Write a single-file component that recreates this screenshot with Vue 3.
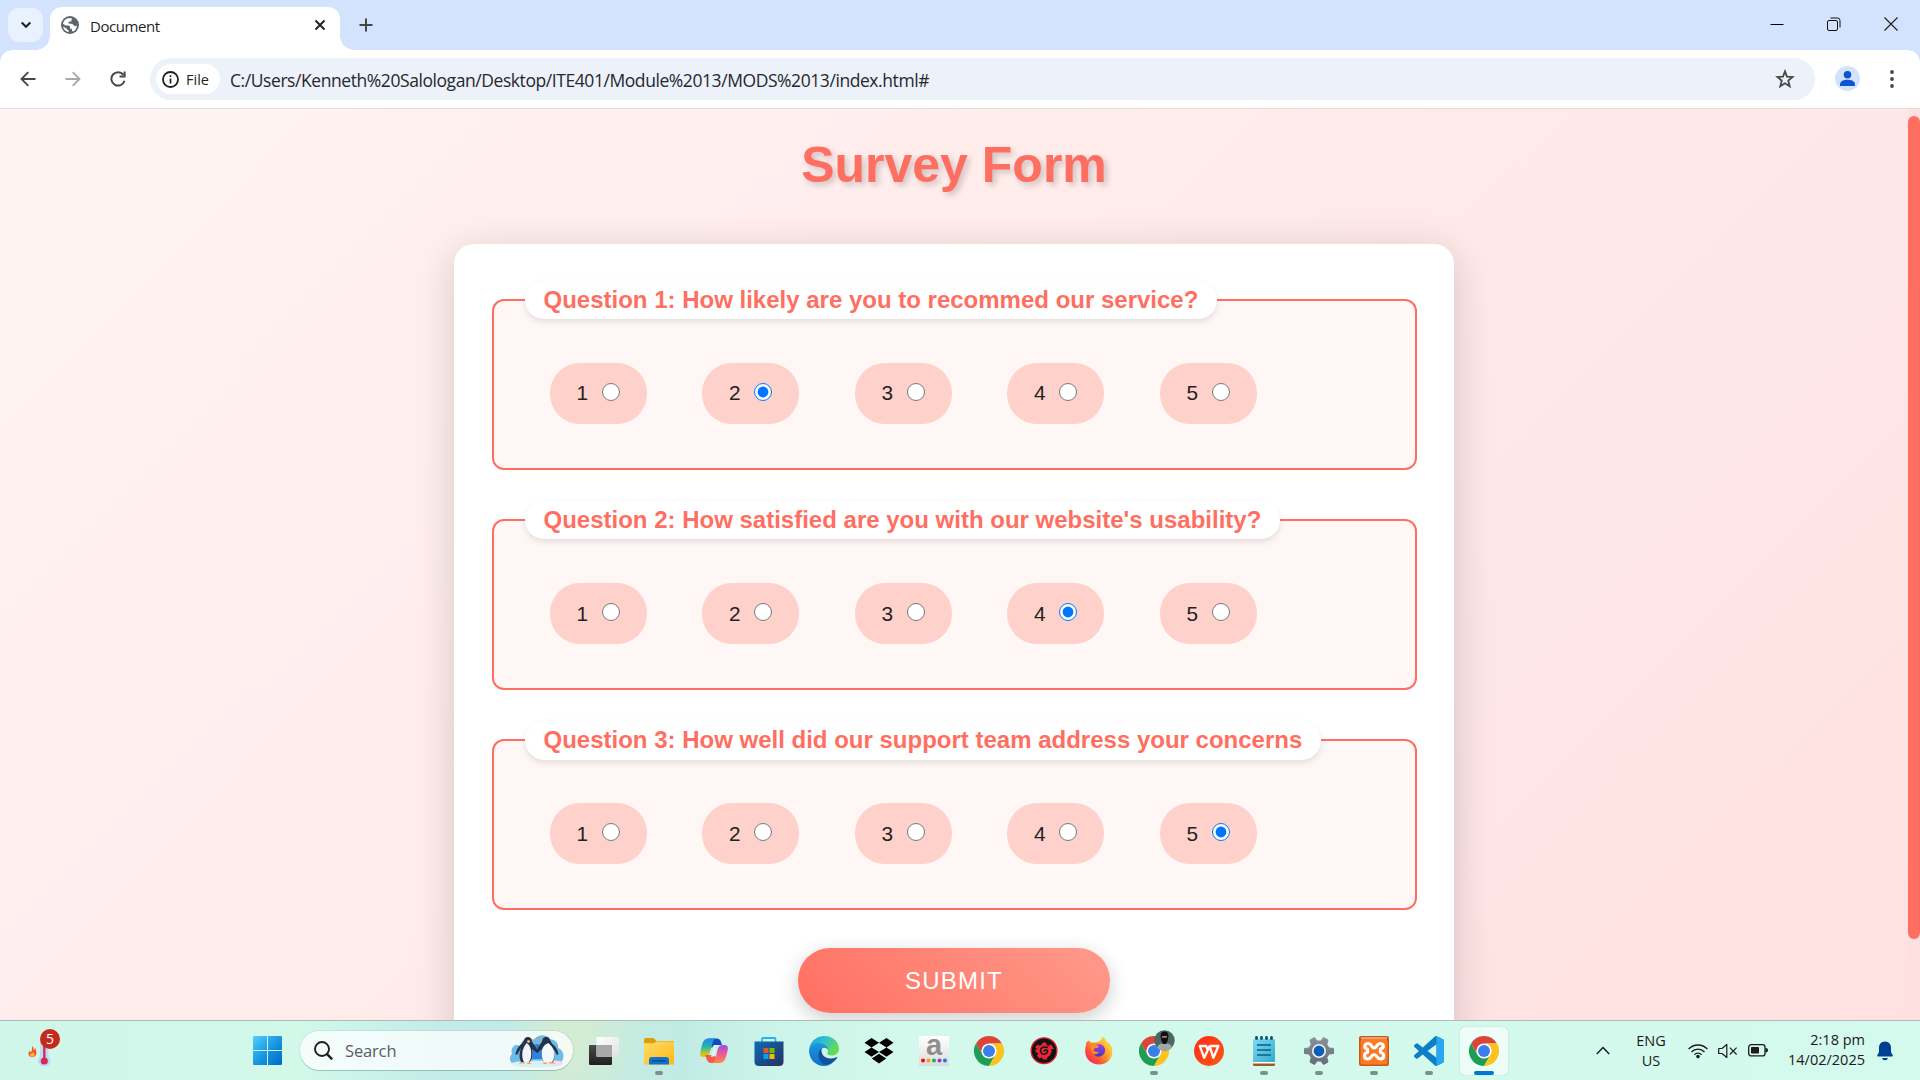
<script setup>
import { ref } from 'vue'

const levels = [1, 2, 3, 4, 5]

const questions = ref([
  { id: 'q1', text: 'Question 1: How likely are you to recommed our service?', answer: 2 },
  { id: 'q2', text: "Question 2: How satisfied are you with our website's usability?", answer: 4 },
  { id: 'q3', text: 'Question 3: How well did our support team address your concerns', answer: 5 },
])

const apps = [
  { id: 'taskview' },
  { id: 'folder', open: true },
  { id: 'copilot' },
  { id: 'store' },
  { id: 'edge' },
  { id: 'dropbox' },
  { id: 'amazon' },
  { id: 'chrome' },
  { id: 'game' },
  { id: 'firefox' },
  { id: 'chrome', open: true, profile: true },
  { id: 'wps' },
  { id: 'notepad', open: true },
  { id: 'settings', open: true },
  { id: 'xampp', open: true },
  { id: 'vscode', open: true },
  { id: 'chrome', open: true, active: true },
]
</script>

<template>
  <div class="screen">
    <svg class="defs" width="0" height="0" aria-hidden="true">
      <defs>
        <linearGradient id="gWin" x1="0" y1="0" x2="1" y2="1"><stop offset="0" stop-color="#4fd0ff" /><stop offset=".55" stop-color="#1593e0" /><stop offset="1" stop-color="#0068c8" /></linearGradient>
        <linearGradient id="gDark" x1="0" y1="0" x2="0" y2="1"><stop offset="0" stop-color="#4a4a4a" /><stop offset="1" stop-color="#1f1f1f" /></linearGradient>
        <linearGradient id="gFold" x1="0" y1="0" x2="1" y2="1"><stop offset="0" stop-color="#ffdc6c" /><stop offset="1" stop-color="#fdb913" /></linearGradient>
        <linearGradient id="gBag" x1="0" y1="0" x2="1" y2="1"><stop offset="0" stop-color="#0a6dbb" /><stop offset="1" stop-color="#2a2f5e" /></linearGradient>
        <linearGradient id="gCopA" x1="0" y1="0" x2="0" y2="1"><stop offset="0" stop-color="#1b8de6" /><stop offset=".45" stop-color="#28b4a8" /><stop offset=".75" stop-color="#a6c83a" /><stop offset="1" stop-color="#ffc400" /></linearGradient>
        <linearGradient id="gCopB" x1="0" y1="0" x2="0" y2="1"><stop offset="0" stop-color="#a24be0" /><stop offset=".5" stop-color="#ee5a94" /><stop offset="1" stop-color="#ff8a3c" /></linearGradient>
        <linearGradient id="gEdgeA" x1="0" y1="0" x2="1" y2=".5"><stop offset="0" stop-color="#1e9be0" /><stop offset=".5" stop-color="#2fc1d0" /><stop offset="1" stop-color="#68dc4c" /></linearGradient>
        <linearGradient id="gEdgeB" x1="0" y1="0" x2="0" y2="1"><stop offset="0" stop-color="#1f97e0" /><stop offset="1" stop-color="#0d6fc8" /></linearGradient>
        <linearGradient id="gFox" x1="1" y1="0" x2="0" y2="1"><stop offset="0" stop-color="#fff04a" /><stop offset=".4" stop-color="#ffa52a" /><stop offset=".72" stop-color="#ff4a3a" /><stop offset="1" stop-color="#f0127a" /></linearGradient>
        <linearGradient id="gFox2" x1="0" y1="0" x2="0" y2="1"><stop offset="0" stop-color="#a03cf0" /><stop offset="1" stop-color="#4b3bb8" /></linearGradient>
        <linearGradient id="gWps" x1="0" y1="0" x2="1" y2="1"><stop offset="0" stop-color="#ff2a1a" /><stop offset="1" stop-color="#ff5a10" /></linearGradient>
        <linearGradient id="gNote" x1="0" y1="0" x2="1" y2="1"><stop offset="0" stop-color="#7bdcf2" /><stop offset="1" stop-color="#34a9d0" /></linearGradient>
        <linearGradient id="gGear" x1="0" y1="0" x2="0" y2="1"><stop offset="0" stop-color="#8a9098" /><stop offset="1" stop-color="#666d76" /></linearGradient>
        <linearGradient id="gAm" x1="0" y1="0" x2="0" y2="1"><stop offset="0" stop-color="#ffffff" /><stop offset="1" stop-color="#dcdcdc" /></linearGradient>
        <linearGradient id="gGlass" x1="0" y1="0" x2="1" y2="1"><stop offset="0" stop-color="#ffffff" /><stop offset="1" stop-color="#dfe2e2" /></linearGradient>
      </defs>
      <symbol id="chrome" viewBox="0 0 48 48">
        <path fill="#db4437" d="M3.215 12A24 24 0 0 1 44.785 12H24A12 12 0 0 0 13.6 30Z" />
        <path fill="#1e9e55" d="M3.215 12A24 24 0 0 0 24 48L34.4 30A12 12 0 0 1 13.6 30Z" />
        <path fill="#fcc31e" d="M24 48A24 24 0 0 0 44.785 12H24A12 12 0 0 1 34.4 30Z" />
        <circle cx="24" cy="24" r="11.7" fill="#fff" />
        <circle cx="24" cy="24" r="9.6" fill="#3b7ded" />
      </symbol>
      <symbol id="taskview" viewBox="0 0 30 30">
        <rect x="0" y="9" width="23" height="20" rx="1.2" fill="url(#gDark)" />
        <rect x="7.5" y="1" width="22.5" height="20" rx="1.2" fill="url(#gGlass)" />
        <path fill="#a9a9a9" d="M7.5 9H23V21H8.5Q7.5 21 7.5 20Z" />
      </symbol>
      <symbol id="folder" viewBox="0 0 30 30">
        <path fill="#e29c08" d="M0 4Q0 2 2 2H9.5L12.5 5H29Q30 5 30 6V12H0Z" />
        <path fill="url(#gFold)" d="M0 7.2H9.5L12.5 5.5H30V28.5H0Z" />
        <path fill="#1173c7" d="M5 28.5V24Q5 21 8 21H22Q25 21 25 24V28.5Z" />
        <rect x="8" y="24.3" width="14" height="1.2" rx=".6" fill="#0b3f86" />
      </symbol>
      <symbol id="copilot" viewBox="0 0 30 30">
        <path fill="#1749c4" d="M9 2.5H18Q21 2.5 22 6L23 9H16Q14 9 13 12L10 8Z" />
        <path fill="url(#gCopA)" d="M9 2.5H17Q14.5 3 13.5 7L11 16Q9.5 21 6 21H4Q.5 21 1.3 16.5Q2.5 9 4.5 5Q6 2.5 9 2.5Z" />
        <path fill="#f45b4b" d="M6 19H14L18 22L15 27H12Q9 27 8 24Z" />
        <path fill="url(#gCopB)" d="M20 27H12.5Q15.5 26.5 16.5 22.5L18.5 14Q20 9 23.5 9H25.5Q29.5 9 28.8 13.5Q27.5 21 25 25Q23.5 27 20 27Z" />
        <path fill="#d8f4f4" d="M15 9H18L15.5 19Q15 21 12 21Z" />
      </symbol>
      <symbol id="store" viewBox="0 0 30 30">
        <path fill="none" stroke="#28b4ee" stroke-width="1.8" d="M8 7V3Q8 2 9 2H20.5Q21.5 2 21.5 3V7" />
        <path fill="url(#gBag)" d="M.5 5.5H29.5V25.5Q29.5 30 25 30H5Q.5 30 .5 25.5Z" />
        <path fill="#f25022" d="M9.5 12H14.5V17H9.5Z" /><path fill="#7fba00" d="M15.5 12H20.5V17H15.5Z" />
        <path fill="#00a4ef" d="M9.5 18H14.5V23H9.5Z" /><path fill="#ffb900" d="M15.5 18H20.5V23H15.5Z" />
      </symbol>
      <symbol id="edge" viewBox="0 0 30 30">
        <path fill="url(#gEdgeA)" d="M.2 13.5C1 5.5 7.5 0 15.2 0C24 0 30 6.2 30 12.5C30 17 26.6 19.6 22.8 19.6C19.5 19.6 17.7 18.3 18.5 17C20 15 19 9 12 8.5C6 8.2 1.6 10 .2 13.5Z" />
        <path fill="url(#gEdgeB)" d="M0 14.5C.6 9.5 5 7 10 7C15.5 7 19.3 11 19.3 14.5C17.5 10.5 12 11 11.5 16C11 21 16 26 24 26.5C21 29 18 30 15 30C6.5 30 0 23 0 14.5Z" />
        <path fill="#10509c" d="M12.5 12.5C8 16 8.5 24 14 27.5C18 30 24 28 28.3 21.8C28.5 21.2 28 20.9 27.5 21.2C20 24.5 11.5 21.5 12.5 12.5Z" />
      </symbol>
      <symbol id="dropbox" viewBox="0 0 30 30">
        <path d="M7.5 2L.5 6.7L7.5 11.4L15 6.7ZM22.5 2L15 6.7L22.5 11.4L29.5 6.7ZM.5 16L7.5 20.7L15 16L7.5 11.4ZM22.5 11.4L15 16L22.5 20.7L29.5 16ZM7.8 22.5L15 27.5L22.2 22.5L15 17.7Z" />
      </symbol>
      <symbol id="game" viewBox="0 0 30 30">
        <circle cx="15" cy="14.7" r="12.9" fill="#131316" stroke="#e2202c" stroke-width="1.3" />
        <path fill="#ea2630" d="M6 11L9 8.5L11 10L13 8L14 6.5H17L17.5 9L20 10L22 8L25 13H22.5C23 17 21 20 18.5 21L18 23.5H14L13 21.5L10 22.5L8 19.5L9.5 17.5L6.500 16V13.5L8.500 13Z" />
        <path fill="none" stroke="#131316" stroke-width="1.5" d="M19 11.5C13 9.5 10.5 13 12 16.5C13.5 19.5 18.5 18.5 18.5 14.5C17 13.5 15.5 14 15 15.5" />
      </symbol>
      <symbol id="firefox" viewBox="0 0 30 30">
        <path fill="url(#gFox)" d="M2.5 6L5 4.5L6.5 6.5L10 6.5L14 6L17 4L19 .5C21 2 22 5 23 7L25 7.5C28 10.5 28.7 14 28 18C27 24 22 28.5 15 28.5C7.5 28.5 1 23 1.2 15C1.2 11.5 2 8.5 2.5 6Z" />
        <circle cx="14.7" cy="14.3" r="6.4" fill="url(#gFox2)" />
        <path fill="#ff8a23" d="M6 8.5C9 7.5 12 8 15 10.5L13.5 12H11.5C10 12.5 9.5 14 9.5 14.5C11 16 13 15.5 15 16C13 18.5 10 19 8 17Z" />
        <path fill="#ffc93a" opacity=".8" d="M19 1C24 7 26 13 23.5 18C25.5 16 26 14 26 12C27.5 17 25 23 21 25.5C27 23 29.5 16 27 10C25 6 20 4 19 1Z" />
      </symbol>
      <symbol id="wps" viewBox="0 0 30 30">
        <circle cx="15" cy="15" r="15" fill="url(#gWps)" />
        <path fill="none" stroke="#fff" stroke-width="2.3" stroke-linejoin="round" d="M13.8 14.5L12.2 10H5.8L10.2 21.8L15.600 10.200L19.400 21.800L24.400 10H16.400" />
      </symbol>
      <symbol id="notepad" viewBox="0 0 30 30">
        <path fill="#a4561a" d="M4 26H26V28.5Q26 30 24.5 30H5.5Q4 30 4 28.5Z" />
        <path fill="#fff" d="M4 22H26V27.5H4Z" />
        <path fill="url(#gNote)" d="M4 4.5Q4 3 5.5 3H24.5Q26 3 26 4.5V26H4Z" />
        <path stroke="#0d5d86" stroke-width="1.5" d="M8 9H22M8 14H22M8 19H22" />
        <path stroke="#0f4f74" stroke-width="2.8" stroke-linecap="round" d="M7.5 1.5V2.5M12.5 1.5V2.5M17.5 1.5V2.5M22.5 1.5V2.5" />
      </symbol>
      <symbol id="settings" viewBox="0 0 30 30">
        <path fill="url(#gGear)" stroke="url(#gGear)" stroke-width="1" stroke-linejoin="round" d="M10.5 1.5L13 5H17L19.5 1.5L24 4L22.8 8.5L25 12L29.5 12.5V17.5L25 18L22.8 21.5L24 26L19.5 28.5L17 25H13L10.5 28.5L6 26L7.2 21.5L5 18L.5 17.5V12.5L5 12L7.2 8.5L6 4Z" />
        <circle cx="15" cy="15" r="7" fill="#f2f6f8" /><circle cx="15" cy="15" r="5.4" fill="#0c5fb4" />
      </symbol>
      <symbol id="xampp" viewBox="0 0 30 30">
        <rect width="30" height="30" rx="2" fill="#c65a18" />
        <rect x="1.5" y="3" width="27" height="25.5" rx="2" fill="#fb7a24" />
        <path fill="#e9a06e" d="M2 1H28V3H2Z" />
        <path fill="none" stroke="#fff" stroke-width="3.2" stroke-linejoin="round" stroke-linecap="round" d="M9.5 7.500C5 7.500 4.500 12.500 8.500 13V16.500C4.500 17 4.500 23 9 23C12.500 23 12.500 18.500 15 18.500C17.500 18.500 18 23 21.500 23C26 22.500 25.500 17 21.500 16.500V13C25.500 12 25 7.500 21 7.500C17.500 7.500 18 12 15 12C12.500 12 12.500 7.500 9.500 7.500Z" />
      </symbol>
      <symbol id="vscode" viewBox="0 0 24 24">
        <path fill="#0d7fc9" d="M23.15 2.587L18.21.21a1.494 1.494 0 0 0-1.705.29l-9.46 8.63-4.12-3.128a.999.999 0 0 0-1.276.057L.327 7.261A1 1 0 0 0 .326 8.74L3.899 12 .326 15.26a1 1 0 0 0 .001 1.479L1.65 17.94a.999.999 0 0 0 1.276.057l4.12-3.128 9.46 8.63a1.492 1.492 0 0 0 1.704.29l4.942-2.377A1.5 1.5 0 0 0 24 20.06V3.939a1.5 1.5 0 0 0-.85-1.352zm-5.146 14.861L10.826 12l7.178-5.448v10.896z" />
        <path fill="#2aa7f2" d="M18.004.15L23.15 2.587Q24 3 24 3.939V20.06Q24 21 23.15 21.412L18.004 23.85Z" />
      </symbol>
    </svg>

    <!-- Browser chrome -->
    <header class="tabstrip">
      <button class="tab-search" aria-label="Search tabs">
        <svg width="12" height="12" viewBox="0 0 12 12"><path d="M1.7 3.5L6 7.8L10.3 3.5" fill="none" stroke="#1f1f1f" stroke-width="2" /></svg>
      </button>
      <div class="tab">
        <svg class="globe" width="22" height="22" viewBox="0 0 24 24"><circle cx="12" cy="12" r="9.8" fill="#5f6368" /><path fill="#fff" d="M11.5 4.3C8 4.4 5 7 4.3 10.6L7 12.6H10.5Q12 12.7 12 14.2V16H14V17.7Q14 19 15.5 19C18 17.8 19.5 15.3 19.7 12.5C18.5 13.4 17 13.3 16 12.3L14.5 10.6H11.5Q10.3 10.4 10.3 9.3Q10.4 8.2 11.6 8.2H13.5V6.8Q13.5 5.8 14.7 5.5C13.7 4.7 12.6 4.3 11.5 4.3ZM4.3 13.5C4.9 16.8 7.4 19.2 10.5 19.7V17.8Q8.6 17.6 8.3 15.7Z" /></svg>
        <span class="tab-title">Document</span>
        <svg class="tab-close" width="12" height="12" viewBox="0 0 12 12"><path d="M1.5 1.5L10.5 10.5M10.5 1.5L1.5 10.5" stroke="#1f1f1f" stroke-width="1.9" /></svg>
      </div>
      <svg class="tab-new" width="14" height="14" viewBox="0 0 14 14"><path d="M7 .5V13.5M.5 7H13.5" stroke="#454746" stroke-width="2" /></svg>
      <div class="window-controls">
        <svg width="14" height="14" viewBox="0 0 14 14"><path d="M.5 7.5H13.5" stroke="#000" /></svg>
        <svg width="14" height="14" viewBox="0 0 14 14"><rect x=".5" y="3.5" width="10" height="10" rx="1.5" fill="none" stroke="#111" /><path d="M3.5 1H10.5Q13 1 13 3.5V10.5" fill="none" stroke="#111" /></svg>
        <svg width="14" height="14" viewBox="0 0 14 14"><path d="M.5 .5L13.5 13.5M13.5 .5L.5 13.5" stroke="#1c1c1c" stroke-width="1.1" /></svg>
      </div>
    </header>

    <div class="toolbar">
      <svg class="nav back" width="16" height="16" viewBox="0 0 16 16"><path d="M15.5 8H2M8.3 1.2L1.5 8L8.3 14.8" fill="none" stroke="#474747" stroke-width="1.9" /></svg>
      <svg class="nav fwd" width="16" height="16" viewBox="0 0 16 16"><path d="M.5 8H14M7.7 1.2L14.5 8L7.7 14.8" fill="none" stroke="#a9a9a9" stroke-width="1.9" /></svg>
      <svg class="nav reload" width="16" height="16" viewBox="0 0 16 16"><path d="M13.4 3.8A6.7 6.7 0 1 0 14.5 9.8" fill="none" stroke="#474747" stroke-width="2" /><path d="M9.5 6.5V4.6H13.6V.5H15.6V6.5Z" fill="#474747" /></svg>
      <div class="omnibox">
        <div class="chip">
          <svg width="17" height="17" viewBox="0 0 17 17"><circle cx="8.5" cy="8.5" r="7.5" fill="none" stroke="#1f1f1f" stroke-width="1.8" /><path d="M8.5 7.5V12.6M8.5 4.2V6" stroke="#1f1f1f" stroke-width="1.7" /></svg>
          <span>File</span>
        </div>
        <span class="url">C:/Users/Kenneth%20Salologan/Desktop/ITE401/Module%2013/MODS%2013/index.html#</span>
        <svg class="star" width="20" height="20" viewBox="0 0 20 20"><path d="M10 2.4L12 7.6L17.6 8L13.3 11.6L14.7 17.2L10 14.2L5.3 17.2L6.7 11.6L2.4 8L8 7.6Z" fill="none" stroke="#474747" stroke-width="1.8" /></svg>
      </div>
      <svg class="avatar" width="25" height="25" viewBox="0 0 25 25"><circle cx="12.5" cy="12.5" r="12.5" fill="#d3e3fd" /><circle cx="12.5" cy="8.7" r="3.8" fill="#0b57d0" /><path d="M5 20V18.3C5 15.2 9 13.8 12.5 13.8S20 15.2 20 18.3V20Z" fill="#0b57d0" /></svg>
      <svg class="more" width="4" height="18" viewBox="0 0 4 18"><circle cx="2" cy="2" r="1.9" fill="#474747" /><circle cx="2" cy="9" r="1.9" fill="#474747" /><circle cx="2" cy="16" r="1.9" fill="#474747" /></svg>
    </div>

    <!-- Page -->
    <div class="viewport">
      <main class="page">
        <h1>Survey Form</h1>
        <form class="card" @submit.prevent>
          <fieldset v-for="q in questions" :key="q.id">
            <legend>{{ q.text }}</legend>
            <div class="options">
              <label v-for="n in levels" :key="n">
                <span>{{ n }}</span>
                <input v-model="q.answer" type="radio" :name="q.id" :value="n">
              </label>
            </div>
          </fieldset>
          <button class="submit" type="submit">SUBMIT</button>
        </form>
      </main>
      <div class="scrollbar"><div class="thumb"></div></div>
    </div>

    <!-- Taskbar -->
    <footer class="taskbar">
      <div class="weather">
        <svg width="34" height="30" viewBox="0 0 34 30">
          <path fill="#f0592b" d="M4.5 10C6 11 5 13 6 14Q7 14.500 6.800 11.800C9 14 9.500 21 4.500 21.200C0 21-.5 17 1.800 14.500Q2 16.500 3 16C4.500 14.500 3.500 12 4.500 10Z" />
          <path fill="#ffb23c" d="M5 16C7 17.500 7 20.800 4.500 20.800S1.700 18.500 2.500 17.500Q4.500 18 5 16Z" />
          <path fill="#b9dcf8" d="M12 8Q12 4 16 4T20.500 8V20.500A6.200 6.200 0 1 1 12 20.500Z" />
          <path stroke="#dd2f57" stroke-width="2.5" d="M16.300 8V24" /><circle cx="16.300" cy="25" r="3.600" fill="#d62a50" />
        </svg>
        <span class="badge">5</span>
      </div>
      <div class="start">
        <svg width="29" height="29" viewBox="0 0 29 29"><path fill="url(#gWin)" d="M1 0H14V14H0V1Q0 0 1 0ZM15 0H28Q29 0 29 1V14H15ZM0 15H14V29H1Q0 29 0 28ZM15 15H29V28Q29 29 28 29H15Z" /></svg>
      </div>
      <div class="search">
        <svg class="lens" width="19" height="19" viewBox="0 0 19 19"><circle cx="8" cy="8" r="7" fill="none" stroke="#1f1f1f" stroke-width="1.9" /><path d="M13 13.2L17.5 17.7" stroke="#1f1f1f" stroke-width="2.4" stroke-linecap="round" /></svg>
        <span>Search</span>
        <svg class="penguins" width="56" height="34" viewBox="0 0 56 34">
          <path fill="#6cbbe9" d="M9 31C1 31-1 24 3 20C1 14 6 9 11 12C13 5 20 3 25 6C28 0 38 0 41 5C47 6 50 10 49 14C55 16 57 25 50 30Z" />
          <path fill="#2f83dc" d="M22 14Q28 6 34 14V25H22Z" />
          <ellipse cx="28" cy="30" rx="26" ry="3.6" fill="#d9f0f7" /><ellipse cx="46" cy="29" rx="8" ry="2.6" fill="#f3dcec" />
          <g>
            <path fill="#26324a" d="M15 6Q16 2.5 19.5 3Q23 3.5 23 7.5Q26 12 29 17L28 19L23 15Q24 24 21 28H12Q9 22 12 14L8 21L6.5 20Q8 13 13 9.5Z" />
            <path fill="#eef4f8" d="M17.5 9Q21 11 22 16Q23 24 20 28H15Q12.5 24 13.5 17Q14.5 13 17.5 9Z" />
            <path fill="#f3a24b" d="M22.500 5L26.500 5.500L23 7ZM12 28L9.5 29.5H15L16 28ZM19 28L18 30H23Z" />
            <circle cx="19.500" cy="7.500" r="1.300" fill="#f2e2c4" />
          </g>
          <g transform="translate(56 0) scale(-1 1)">
            <path fill="#26324a" d="M15 6Q16 2.5 19.5 3Q23 3.5 23 7.500Q26 12 29 17L28 19L23 15Q24 24 21 28H12Q9 22 12 14L8 21L6.5 20Q8 13 13 9.5Z" />
            <path fill="#f2f7fa" d="M16.5 9Q22 11 23 16Q24 24 21 28H13Q9.500 24 11 17Q12 13 16.5 9Z" />
            <path fill="#f3a24b" d="M22.5 5L26.5 5.500L23 7ZM12 28L9.5 29.5H15L16 28ZM19 28L18 30H23Z" />
          </g>
        </svg>
      </div>
      <nav class="apps">
        <div v-for="(app, i) in apps" :key="i" class="app" :class="{ open: app.open, active: app.active }">
          <svg v-if="app.id === 'amazon'" width="30" height="30" viewBox="0 0 30 30">
            <rect width="30" height="30" fill="url(#gAm)" />
            <text x="15" y="19" text-anchor="middle" font-family="Liberation Sans, sans-serif" font-weight="bold" font-size="29" fill="#8f8f8f">a</text>
            <circle cx="4" cy="24.5" r="2" fill="#f00d12" /><circle cx="9.5" cy="24.5" r="2" fill="#f29c1f" /><circle cx="15" cy="24.5" r="2" fill="#1fae54" /><circle cx="20.5" cy="24.5" r="2" fill="#8b3bdc" /><circle cx="26" cy="24.5" r="2" fill="#1680d8" />
          </svg>
          <svg v-else width="30" height="30"><use :href="'#' + app.id" /></svg>
          <svg v-if="app.profile" class="profile" width="21" height="21" viewBox="0 0 21 21">
            <circle cx="10.5" cy="10.5" r="10.2" fill="#4c6664" />
            <path fill="#9fa9ac" d="M3 17.5Q5 13.5 8 13.500H13Q16.5 13.5 18 17.5Q15 20.7 10.5 20.7T3 17.5Z" />
            <path fill="#0f0f10" d="M6.500 6Q6.500 1.500 10.500 1.500T14.500 6L13.500 11L12 14H9L7.500 11Z" />
            <path fill="#a07b6a" d="M8 6H13V7.800H8Z" />
          </svg>
        </div>
      </nav>
      <div class="tray">
        <svg class="chev" width="14" height="9" viewBox="0 0 14 9"><path d="M.8 8L7 1.6L13.2 8" fill="none" stroke="#1b1b1b" stroke-width="1.5" /></svg>
        <div class="lang"><span>ENG</span><span>US</span></div>
        <svg class="wifi" width="20" height="16" viewBox="0 0 20 16"><g fill="none" stroke="#1b1b1b" stroke-width="1.3"><path d="M.6 6A13 13 0 0 1 19.4 6" /><path d="M3.5 9A9 9 0 0 1 16.5 9" /><path d="M6.4 11.7A5 5 0 0 1 13.6 11.7" /></g><circle cx="10" cy="13.6" r="1.8" fill="#1b1b1b" /></svg>
        <svg class="mute" width="20" height="16" viewBox="0 0 20 16"><path d="M.7 5.5H4L8.8 1.5V14.5L4 10.5H.7Z" fill="none" stroke="#1b1b1b" stroke-width="1.2" stroke-linejoin="round" /><path d="M11.800 4.700L18.600 11.500M18.600 4.700L11.800 11.500" stroke="#1b1b1b" stroke-width="1.2" /></svg>
        <svg class="batt" width="20" height="13" viewBox="0 0 20 13"><rect x=".7" y=".7" width="16.3" height="11.2" rx="2.5" fill="none" stroke="#1b1b1b" stroke-width="1.3" /><rect x="3" y="3" width="8" height="6.6" rx=".8" fill="#1b1b1b" /><path d="M17.5 4H18.3Q20 4.4 20 6.3T18.3 8.600H17.5Z" fill="#1b1b1b" /></svg>
        <div class="clock"><span>2:18 pm</span><span>14/02/2025</span></div>
        <svg class="bell" width="16" height="20" viewBox="0 0 16 20"><path fill="#013f94" d="M8 .5C11.7 .5 14 3.3 14 6.800V11L15.8 14.4Q16 15.400 15 15.500H1Q0 15.400 .2 14.400L2 11V6.800C2 3.300 4.300 .5 8 .5ZM5 17H11Q10.500 19.300 8 19.300T5 17Z" /></svg>
      </div>
    </footer>
  </div>
</template>

<style>
body {
  overflow: hidden;
}
</style>

<style scoped>
* {
  box-sizing: border-box;
}
.screen {
  width: 1920px;
  height: 1080px;
  display: flex;
  flex-direction: column;
  overflow: hidden;
  background: #fff;
  font-family: "Open Sans", "Noto Sans", sans-serif;
}
.screen svg {
  display: block;
  flex: none;
}
.defs {
  position: absolute;
}

/* tab strip */
.tabstrip {
  height: 50px;
  flex: none;
  display: flex;
  align-items: flex-start;
  background: #d3e3fd;
}
.tab-search {
  width: 35px;
  height: 34px;
  margin: 8px 7px 0 8px;
  padding: 0;
  border: 0;
  border-radius: 11px;
  background: #e9f0fe;
  display: flex;
  align-items: center;
  justify-content: center;
}
.tab {
  position: relative;
  width: 290px;
  height: 43px;
  margin-top: 7px;
  padding: 0 14px 7px 9px;
  border-radius: 12px 12px 0 0;
  background: #fff;
  display: flex;
  align-items: center;
}
.tab::before,
.tab::after {
  content: "";
  position: absolute;
  bottom: 0;
  width: 14px;
  height: 14px;
}
.tab::before {
  left: -14px;
  background: radial-gradient(circle at 0 0, transparent 13.5px, #fff 14px);
}
.tab::after {
  right: -14px;
  background: radial-gradient(circle at 100% 0, transparent 13.5px, #fff 14px);
}
.tab-title {
  flex: 1;
  margin: 1px 0 0 9px;
  font-size: 15px;
  line-height: 20px;
  letter-spacing: -0.45px;
  color: #1f1f1f;
}
.tab-new {
  margin: 18px 0 0 18.5px;
}
.window-controls {
  margin: 17px 22px 0 auto;
  display: flex;
  gap: 43px;
}

/* toolbar */
.toolbar {
  height: 59px;
  flex: none;
  display: flex;
  align-items: center;
  padding-bottom: 1px;
  border-bottom: 1px solid #dbe0e0;
  background:
    radial-gradient(circle at 12px 12px, #fff 11.5px, #d3e3fd 12px) 0 0 / 12px 12px no-repeat,
    radial-gradient(circle at 0 12px, #fff 11.5px, #d3e3fd 12px) 100% 0 / 12px 12px no-repeat,
    #fff;
}
.back {
  margin-left: 20px;
}
.fwd {
  margin-left: 28.5px;
}
.reload {
  margin-left: 29px;
}
.omnibox {
  width: 1665px;
  height: 42px;
  margin: 1px 0 0 24.5px;
  padding: 0 20px 0 6px;
  border-radius: 21px;
  background: #ecf1fa;
  display: flex;
  align-items: center;
}
.chip {
  width: 64px;
  height: 30px;
  padding-left: 6px;
  border-radius: 15px;
  background: #fff;
  display: flex;
  align-items: center;
  gap: 7px;
  font-size: 14.5px;
  font-weight: 500;
  color: #1f1f1f;
}
.url {
  margin-left: 10px;
  padding-top: 1px;
  flex: 1;
  font-size: 17.5px;
  line-height: 24px;
  letter-spacing: -0.43px;
  color: #26282b;
  white-space: nowrap;
}
.avatar {
  margin-left: 20px;
}
.more {
  margin-left: 30px;
}

/* page */
.viewport {
  height: 911px;
  flex: none;
  display: flex;
  overflow: hidden;
  background: linear-gradient(135deg, #fff4f2, #ffe0e1) 0 0 / 100% 1000px;
}
.page {
  width: 1908px;
  height: 911px;
  font-family: "Liberation Sans", Arial, sans-serif;
}
h1 {
  margin: 29px 0 0;
  font-size: 50px;
  line-height: 55px;
  text-align: center;
  color: #ff6f61;
  text-shadow: 3px 3px 6px rgba(0, 0, 0, 0.2);
}
.card {
  width: 1000px;
  height: 900px;
  margin: 51px auto 0;
  padding: 37px 37.5px 0;
  border-radius: 20px;
  background: #fff;
  box-shadow: 0 8px 40px rgba(0, 0, 0, 0.17);
}
fieldset {
  height: 189.2px;
  margin: 0 0 30.9px;
  padding: 0 0 0 56px;
  border: 2px solid #ff6f61;
  border-radius: 12px;
  background: #fff6f6;
}
legend {
  height: 38.4px;
  margin-left: -25px;
  padding: 0 19px;
  border-radius: 20px;
  background: #fff;
  box-shadow: 0 3px 6px rgba(0, 0, 0, 0.1);
  font-size: 24px;
  font-weight: bold;
  line-height: 38px;
  color: #ff6f61;
  white-space: nowrap;
}
.options {
  display: flex;
  gap: 55.5px;
  margin-top: 43.6px;
}
label {
  width: 97px;
  height: 61px;
  padding-left: 27px;
  border-radius: 30px;
  background: #ffd1cb;
  display: flex;
  align-items: center;
  font-size: 20.8px;
  color: #222;
}
input {
  width: 18px;
  height: 18px;
  margin: 0 0 3px 13.6px;
}
.submit {
  display: block;
  width: 312px;
  height: 65px;
  margin: 38px auto 0;
  border: 0;
  border-radius: 32px;
  background: linear-gradient(45deg, #ff6f61, #ff9a8b);
  box-shadow: 0 6px 20px rgba(0, 0, 0, 0.2);
  font-family: inherit;
  font-size: 24px;
  letter-spacing: 1.2px;
  color: #fff;
}
.scrollbar {
  width: 12px;
  padding-top: 7px;
  background: #ffe0e0;
}
.thumb {
  height: 823px;
  border-radius: 6px;
  background: #ff6f61;
}

/* taskbar */
.taskbar {
  height: 60px;
  flex: none;
  display: flex;
  align-items: center;
  border-top: 1px solid #a9bcb6;
  background:
    radial-gradient(ellipse 60px 60px at 575px 20px, rgba(214, 236, 208, 0.9), rgba(214, 236, 208, 0)),
    linear-gradient(90deg, #d0f6ea 0, #d2f8ea 300px, #c3ece8 440px, #c0ebe7 500px, #cdebda 560px, #c0ebe5 680px, #cdf4e8 780px, #d3f8ec 900px, #d4f9ed 100%);
}
.weather {
  position: relative;
  width: 240px;
  padding-left: 28px;
}
.badge {
  position: absolute;
  left: 40px;
  top: -7px;
  width: 20px;
  height: 20px;
  border-radius: 50%;
  background: #c42b1c;
  color: #fff;
  font-size: 14px;
  line-height: 20px;
  text-align: center;
}
.start {
  width: 54px;
  display: flex;
  justify-content: center;
}
.search {
  width: 273px;
  height: 39px;
  margin-left: 6px;
  padding: 0 8px 0 14px;
  border-radius: 20px;
  background: rgba(255, 255, 255, 0.75);
  box-shadow: 0 0 0 1px rgba(0, 60, 50, 0.07), 0 1px 0 rgba(0, 60, 50, 0.2);
  display: flex;
  align-items: center;
  font-size: 16.5px;
  color: #5a5f5e;
}
.search span {
  flex: 1;
  margin-left: 12px;
  letter-spacing: -0.15px;
}
.apps {
  margin-left: 3px;
  display: flex;
}
.app {
  position: relative;
  width: 55px;
  height: 48px;
  display: flex;
  align-items: center;
  justify-content: center;
}
.app.active::before {
  content: "";
  position: absolute;
  inset: 0 3px 0 4px;
  border-radius: 5px;
  background: rgba(255, 255, 255, 0.6);
  box-shadow: 0 0 1px rgba(0, 60, 50, 0.35);
}
.app > svg {
  position: relative;
}
.app.open::after {
  content: "";
  position: absolute;
  left: 50%;
  bottom: 0;
  width: 8px;
  height: 4px;
  margin-left: -4px;
  border-radius: 2px;
  background: #7d918a;
}
.app.active::after {
  width: 20px;
  margin-left: -10px;
  background: #0078d4;
}
.app > .profile {
  position: absolute;
  left: 28px;
  top: 3px;
}
.tray {
  margin-left: auto;
  padding-right: 27px;
  display: flex;
  align-items: center;
  font-size: 14.5px;
  line-height: 20px;
  color: #1b1b1b;
}
.lang {
  width: 34px;
  margin-left: 24px;
  display: flex;
  flex-direction: column;
  align-items: center;
}
.wifi {
  margin-left: 20px;
}
.mute {
  margin-left: 10px;
}
.batt {
  margin-left: 10px;
}
.clock {
  width: 86px;
  margin: -2px 0 0 11px;
  display: flex;
  flex-direction: column;
  align-items: flex-end;
  white-space: nowrap;
}
.bell {
  margin-left: 12px;
}
</style>
